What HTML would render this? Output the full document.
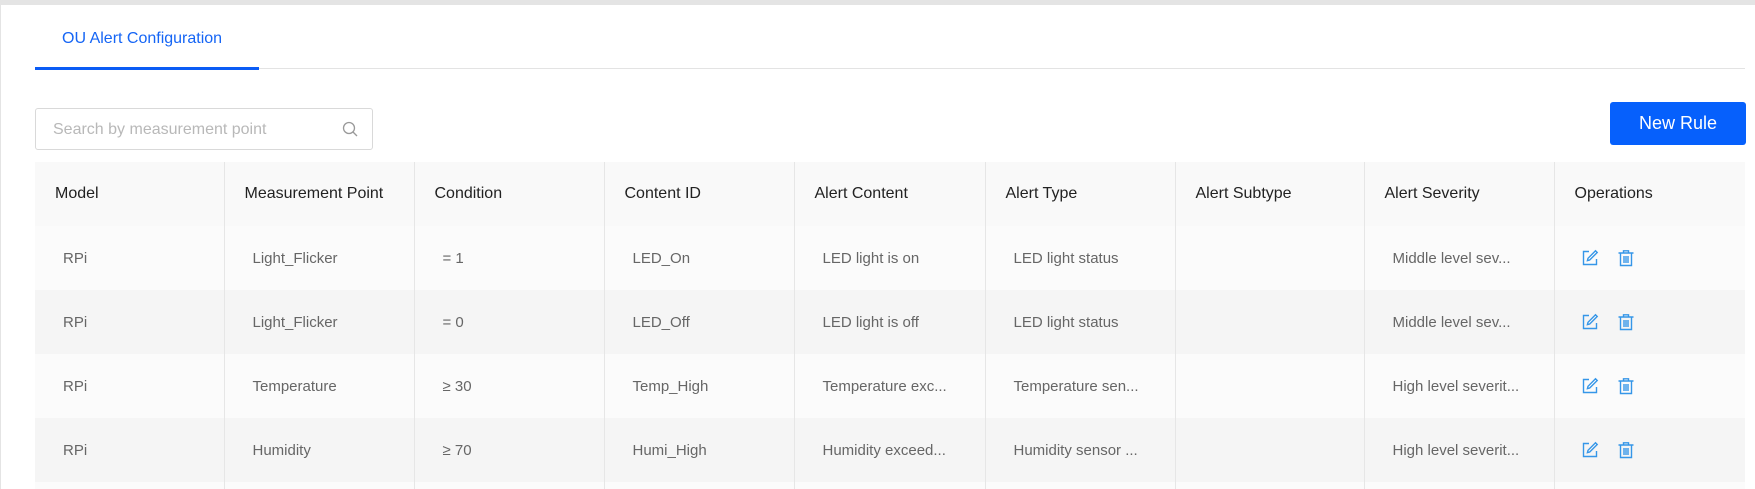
<!DOCTYPE html>
<html><head><meta charset="utf-8"><style>
*{margin:0;padding:0;box-sizing:border-box}
html,body{width:1755px;height:489px;overflow:hidden}
body{background:#fff;font-family:"Liberation Sans",sans-serif}
.wrap{position:relative;width:1755px;height:489px;overflow:hidden}
.top{position:absolute;left:0;top:0;width:1755px;height:5px;background:#e4e4e4}
.lb{position:absolute;left:0;top:5px;width:1px;height:484px;background:#e4e4e4}
.tab{position:absolute;left:62px;top:30px;font-size:16px;color:#1565f5;font-weight:500}
.tabline{position:absolute;left:35px;top:68px;width:1710px;height:1px;background:#e3e3e3}
.tabul{position:absolute;left:35px;top:67px;width:224px;height:3px;background:#0b5cf5}
.search{position:absolute;left:35px;top:108px;width:338px;height:42px;border:1px solid #d9d9d9;border-radius:3px}
.search span{position:absolute;left:17px;top:12px;font-size:16px;color:#b8b8b8}
.search svg{position:absolute;right:14px;top:12px}
.btn{position:absolute;left:1610px;top:102px;width:136px;height:43px;background:#0660fc;border-radius:3px;color:#fff;font-size:18px;text-align:center;line-height:43px}
table{position:absolute;left:35px;top:162px;border-collapse:collapse;table-layout:fixed;width:1710px}
td,th{height:64px;border-left:1px solid #e6e6e6;text-align:left;font-weight:normal;white-space:nowrap;overflow:hidden}
td:first-child,th:first-child{border-left:none}
th{background:#f9f9f9;color:#222;font-size:16px;padding-left:20px}
td{color:#666;font-size:15px;padding-left:28px}
tr.a td{background:#fbfbfb}
tr.b td{background:#f5f5f5}
tr.last td{height:7px}
td svg{vertical-align:middle;margin-right:18px}
</style></head><body><div class="wrap">
<div class="top"></div><div class="lb"></div>
<div class="tab">OU Alert Configuration</div>
<div class="tabline"></div><div class="tabul"></div>
<div class="search"><span>Search by measurement point</span><svg width="16" height="16" viewBox="0 0 16 16" fill="none" stroke="#999" stroke-width="1.3"><circle cx="7" cy="7" r="5.5"/><path d="M11 11l4 4"/></svg></div>
<div class="btn">New Rule</div>
<table>
<colgroup><col style="width:189px"><col style="width:190px"><col style="width:190px"><col style="width:190px"><col style="width:191px"><col style="width:190px"><col style="width:189px"><col style="width:190px"><col style="width:191px"></colgroup>
<tr><th>Model</th><th>Measurement Point</th><th>Condition</th><th>Content ID</th><th>Alert Content</th><th>Alert Type</th><th>Alert Subtype</th><th>Alert Severity</th><th>Operations</th></tr>
<tr class="a"><td>RPi</td><td>Light_Flicker</td><td>= 1</td><td>LED_On</td><td>LED light is on</td><td>LED light status</td><td></td><td>Middle level sev...</td><td class="ops"></td></tr>
<tr class="b"><td>RPi</td><td>Light_Flicker</td><td>= 0</td><td>LED_Off</td><td>LED light is off</td><td>LED light status</td><td></td><td>Middle level sev...</td><td class="ops"></td></tr>
<tr class="a"><td>RPi</td><td>Temperature</td><td>≥ 30</td><td>Temp_High</td><td>Temperature exc...</td><td>Temperature sen...</td><td></td><td>High level severit...</td><td class="ops"></td></tr>
<tr class="b"><td>RPi</td><td>Humidity</td><td>≥ 70</td><td>Humi_High</td><td>Humidity exceed...</td><td>Humidity sensor ...</td><td></td><td>High level severit...</td><td class="ops"></td></tr>
<tr class="a last"><td></td><td></td><td></td><td></td><td></td><td></td><td></td><td></td><td></td></tr>
</table>
</div>
<script>
var ic='<svg width="18" height="18" viewBox="0 0 18 18" fill="none" stroke="#3596e8" stroke-width="1.4"><path d="M8 2.5H2.5v13h13V10"/><path d="M14.5 1.8l1.7 1.7-7.5 7.5-2.3.6.6-2.3z"/></svg><svg width="18" height="18" viewBox="0 0 18 18" fill="none" stroke="#3596e8" stroke-width="1.4"><path d="M1.5 4h15M6.5 4V1.8h5V4M3.5 4v12.5h11V4M7 7v7M9 7v7M11 7v7"/></svg>';
document.querySelectorAll('td.ops').forEach(function(t){t.innerHTML=ic;t.style.paddingLeft='26px'});
</script>
</body></html>
